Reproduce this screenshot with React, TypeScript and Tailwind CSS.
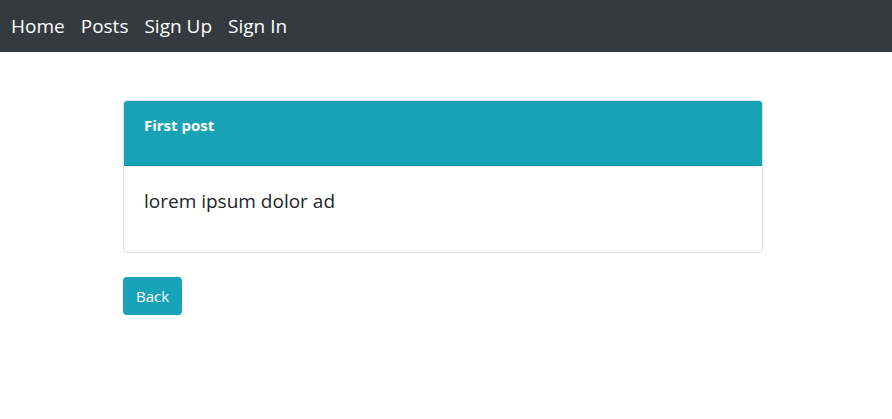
import React from 'react';

const links = ['Home', 'Posts', 'Sign Up', 'Sign In'];

const App = () => {
  return (
    <div className="min-h-screen bg-white" style={{ fontFamily: '"Open Sans", "Noto Sans", sans-serif' }}>
      {/* Navbar */}
      <nav className="h-[52px] bg-[#343a40] flex items-center px-[11px] gap-[16px]">
        {links.map((l) => (
          <a key={l} href="#" className="text-white text-[19px] leading-none">
            {l}
          </a>
        ))}
      </nav>

      {/* Post card */}
      <div className="ml-[123px] w-[640px] pt-[48px]">
        <div className="border border-[#dfdfdf] rounded-[4px] overflow-hidden">
          <div className="h-[65px] bg-[#17a2b8] border-b border-[#148a9c] px-[20px] pt-[12px]">
            <h5 className="text-white font-bold text-[15px] leading-[24px]">First post</h5>
          </div>
          <div className="h-[86px] px-[20px] pt-[20px]">
            <p className="text-[#212529] text-[19px] leading-[30px]">lorem ipsum dolor ad</p>
          </div>
        </div>

        <button className="mt-[24px] bg-[#17a2b8] text-white text-[15px] leading-[24px] px-[12px] py-[7px] rounded-[4px] w-[59px]">
          Back
        </button>
      </div>
    </div>
  );
};

export default App;
